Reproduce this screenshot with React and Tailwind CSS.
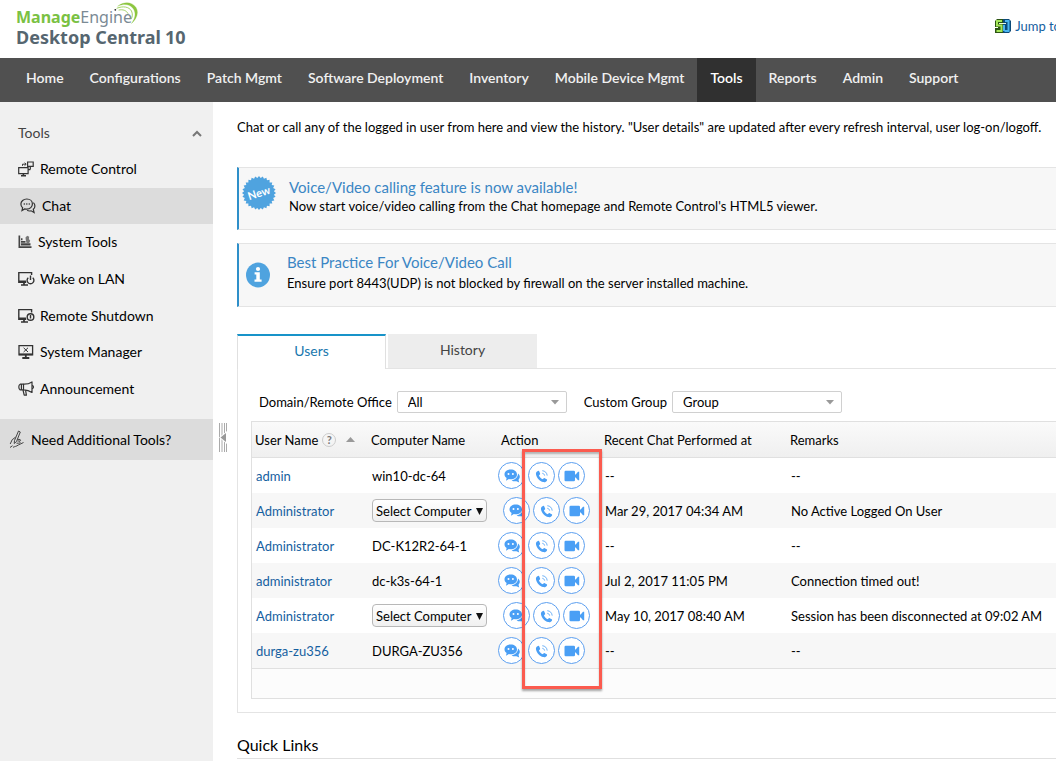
const NAV_ITEMS = [
  'Home',
  'Configurations',
  'Patch Mgmt',
  'Software Deployment',
  'Inventory',
  'Mobile Device Mgmt',
  'Tools',
  'Reports',
  'Admin',
  'Support',
];

const USERS = [
  { name: 'admin', computer: 'win10-dc-64', chatAt: '--', remarks: '--' },
  { name: 'Administrator', computer: null, chatAt: 'Mar 29, 2017 04:34 AM', remarks: 'No Active Logged On User' },
  { name: 'Administrator', computer: 'DC-K12R2-64-1', chatAt: '--', remarks: '--' },
  { name: 'administrator', computer: 'dc-k3s-64-1', chatAt: 'Jul 2, 2017 11:05 PM', remarks: 'Connection timed out!' },
  { name: 'Administrator', computer: null, chatAt: 'May 10, 2017 08:40 AM', remarks: 'Session has been disconnected at 09:02 AM' },
  { name: 'durga-zu356', computer: 'DURGA-ZU356', chatAt: '--', remarks: '--' },
];

/* ---------- sidebar icons ---------- */

function RemoteIcon() {
  return (
    <svg width="16" height="16" viewBox="0 0 16 16" fill="none" stroke="#333" strokeWidth="1.2">
      <path d="M9.6 1h5.6v4.4H9.6zM.7 6.7h9.4v6H.7zM12.3 5.4v3.2M12.3 8.6h-2" />
      <path d="M4.5 4.8V3.2h3.2M6.6 1.8l1.6 1.4-1.6 1.4" strokeWidth="1" />
      <path d="M3 14.7h5M5.4 12.7v2" strokeWidth="1.6" />
    </svg>
  );
}

function ChatIcon() {
  return (
    <svg width="16" height="16" viewBox="0 0 16 16" fill="none" stroke="#333" strokeWidth="1.2">
      <path d="M6.800 1C10 1 12.400 3.200 12.400 6s-2.400 5.200-5.600 5.200c-.8 0-1.500-.1-2.100-.3L2 12.500l.6-2.700C1.500 8.900.9 7.500.9 6c0-2.800 2.600-5 5.900-5z" />
      <path d="M13.400 4.600c1 .9 1.500 2 1.500 3.300 0 1.400-.6 2.600-1.600 3.400l.8 3.300-3-1.800c-1.500.4-2.900.2-4-.5" />
      <circle cx="4.300" cy="6" r=".8" fill="#333" stroke="none" />
      <circle cx="6.800" cy="6" r=".8" fill="#333" stroke="none" />
      <circle cx="9.300" cy="6" r=".8" fill="#333" stroke="none" />
    </svg>
  );
}

function SystemToolsIcon() {
  return (
    <svg width="14" height="14" viewBox="0 0 14 14" fill="#444">
      <path d="M.5.500H2.200v10.800h11.300v1.700H.500z" />
      <path d="M3 6h4.500v1.700H3zM3 8.300h9.500v2.300H3zM3 3.200h1.500v2H3z" />
      <path d="M7.500 2.500 9.200.700l2 1-.3 2.200 1.300 1.800-1 2.300H8.500L7.800 5.300z" fill="#777" />
    </svg>
  );
}

function WakeIcon() {
  return (
    <svg width="17" height="16" viewBox="0 0 17 16" fill="none" stroke="#333" strokeWidth="1.400">
      <path d="M13.600 4V1.600H.8v9.600h7.400" />
      <path d="M1 10.500h7" strokeWidth="2" />
      <path d="M3 14h7M6 11v3" strokeWidth="1.700" />
      <path d="M10.300 6.700a3.400 3.400 0 1 0 4.400 0M12.500 4.500V9" />
    </svg>
  );
}

function ShutdownIcon() {
  return (
    <svg width="17" height="16" viewBox="0 0 17 16" fill="none" stroke="#333" strokeWidth="1.400">
      <path d="M13.600 4.500V1.600H.8v9.600h7.400" />
      <path d="M1 10.500h7" strokeWidth="2" />
      <path d="M3 14h7M6 11v3" strokeWidth="1.700" />
      <circle cx="12.500" cy="9" r="3.300" />
      <path d="M12.500 7v3.500" />
    </svg>
  );
}

function ManagerIcon() {
  return (
    <svg width="16" height="16" viewBox="0 0 16 16" fill="none" stroke="#333" strokeWidth="1.300">
      <path d="M1 1.600h13.600v9.200H1z" />
      <path d="M1 10.300h13.600" strokeWidth="1.800" />
      <path d="M5.600 3.800l4.400 4.200M10 3.800L5.600 8" strokeWidth="1" />
      <path d="M4.300 14h7M7.800 11v3" strokeWidth="1.800" />
    </svg>
  );
}

function AnnouncementIcon() {
  return (
    <svg width="17" height="16" viewBox="0 0 17 16" fill="none" stroke="#333" strokeWidth="1.200" strokeLinejoin="round">
      <path d="M5.500 3.200C9 3.300 11.500 2.600 14 .9v10.600C11.500 9.800 9 8.800 5.500 8.900z" />
      <path d="M5.500 3.200H2.200C1 3.800.8 5 .8 6s.3 2.200 1.400 2.900h3.300M3.400 3.300v5.500M14 4.600c2 0 2 3 0 3" />
      <path d="M5 9l1.200 5.200h2.200L7.600 9.300" />
    </svg>
  );
}

function WritingHandIcon() {
  return (
    <svg width="16" height="19" viewBox="0 0 16 19" fill="none" stroke="#444" strokeWidth="1" strokeLinejoin="round">
      <path d="M9.500 1 5.500 10.500l-.3 3 2.300-2L11.300 2z" />
      <path d="M6.500 7.200 3.200 9.700 1.200 14M8.500 9.300l2.600.2c.8.400.6 1.500-.3 1.500H8.500M10.500 11.500c1.300.8.600 1.800-1 1.700H7.500M14.500 12.500 9.300 15c-1.700 1.400-3.700 1.500-5.300 2.300" />
      <path d="M1 17.500l2.500-1.800" />
    </svg>
  );
}

const TOOLS = [
  { label: 'Remote Control', icon: <RemoteIcon />, row: 'gap-1.5' },
  { label: 'Chat', icon: <ChatIcon />, row: 'gap-1.5 pl-0.5 bg-[#dcdcdc]' },
  { label: 'System Tools', icon: <SystemToolsIcon />, row: 'gap-1.5' },
  { label: 'Wake on LAN', icon: <WakeIcon />, row: 'gap-[5px]' },
  { label: 'Remote Shutdown', icon: <ShutdownIcon />, row: 'gap-[5px]' },
  { label: 'System Manager', icon: <ManagerIcon />, row: 'gap-1.5' },
  { label: 'Announcement', icon: <AnnouncementIcon />, row: 'gap-[5px]' },
];

/* ---------- action icons ---------- */

function BubblesIcon() {
  return (
    <svg width="16" height="14" viewBox="0 0 16 14" fill="#4a9ff5">
      <path d="M14 4.500c1.200.8 1.800 2 1.800 3.300 0 1.100-.5 2.200-1.300 3l.7 2.600-2.700-1.200c-1.800.4-3.700.1-4.900-.8C11.500 10.800 14 8 14 4.500z" />
      <path d="M6.700.500C10.300.500 13 2.600 13 5.400s-2.700 4.900-6.300 4.900c-.6 0-1.200-.1-1.800-.2L2 11.700l.6-2.800C1.300 8 .500 6.800.500 5.400.500 2.600 3.200.500 6.700.500z" />
      <g fill="#fff">
        <circle cx="4.500" cy="5" r="1" />
        <circle cx="8.900" cy="5" r="1" />
      </g>
    </svg>
  );
}

function PhoneIcon() {
  return (
    <svg width="14" height="14" viewBox="0 0 14 14" fill="none" stroke="#4a9ff5">
      <path d="M3 1.900c.7-.2 1 .1 1.300.7l.8 2c.2.500 0 .9-.5 1.200-.6.300-.7.700-.4 1.200.8 1.400 1.700 2.300 3 3 .5.300.9.200 1.300-.4.300-.5.700-.6 1.200-.4l2 1c.5.300.6.700.3 1.200-.7 1.500-2.200 2.100-3.800 1.700C4.600 12.100 1.700 9.200 1 5.500.700 3.700 1.500 2.400 3 1.900z" fill="#4a9ff5" stroke="none" />
      <path d="M7.300 4.300c1.300.2 2.100 1 2.300 2.300M7.300 1.700c2.800.3 4.600 2 4.900 4.900" strokeWidth="1" opacity=".8" />
    </svg>
  );
}

function VideoIcon() {
  return (
    <svg width="16" height="12" viewBox="0 0 16 12" fill="#4a9ff5">
      <rect x=".500" y=".700" width="10.500" height="10.600" rx="1.200" />
      <path d="M10.500 4.500h1.200L14 1.700h1.200v8.600H14l-2.300-2.800h-1.200z" />
    </svg>
  );
}

function ActionButton({ label, children }) {
  return (
    <button type="button" aria-label={label} className="flex size-[27px] items-center justify-center rounded-full border border-[#5c9ff0] bg-white">
      {children}
    </button>
  );
}

/* ---------- banner icons ---------- */

function NewBadge() {
  // 28 teeth around the rim
  const points = Array.from({ length: 56 }, (_, i) => {
    const r = i % 2 ? 15 : 17;
    const a = (i * Math.PI) / 28;
    return `${(17 + r * Math.cos(a)).toFixed(2)},${(17 + r * Math.sin(a)).toFixed(2)}`;
  }).join(' ');
  return (
    <svg width="34" height="34" viewBox="0 0 34 34">
      <polygon points={points} fill="#4fa3df" />
      <text x="17" y="21" textAnchor="middle" fill="#fff" fontFamily="Lato, sans-serif" fontSize="11" fontWeight="700" transform="rotate(-18 17 17)">New</text>
    </svg>
  );
}

function InfoBadge() {
  return (
    <svg width="24" height="26" viewBox="0 0 24 26">
      <ellipse cx="12" cy="13" rx="12" ry="12.500" fill="#4fa3df" />
      <path d="M8.600 10.200h5.200v7.300h1.800v2.200H8.500v-2.200h1.800v-5.100H8.600z" fill="#fff" />
      <circle cx="12" cy="7" r="2.100" fill="#fff" />
    </svg>
  );
}

function Banner({ icon, title, children, className }) {
  return (
    <section className={`flex border-y border-l-2 border-y-[#e4e4e4] border-l-[#2e8fc9] bg-[#f7f7f7] pt-2 ${className}`}>
      {icon}
      <div>
        <h2 className="text-[15px] leading-5 text-[#3b86c4]">{title}</h2>
        {children}
      </div>
    </section>
  );
}

function FilterSelect({ id, label, value }) {
  return (
    <div className="flex items-center gap-[5px]">
      <label htmlFor={id}>{label}</label>
      <div className="relative">
        <select id={id} className="block h-[22px] w-[170px] appearance-none rounded-xs border border-[#d0d0d0] bg-white pl-2.5 text-[13px] leading-5">
          <option>{value}</option>
        </select>
        <svg className="pointer-events-none absolute top-[9px] right-2" width="8" height="5" viewBox="0 0 8 5">
          <path d="M0 0h8L4 4.500z" fill="#999" />
        </svg>
      </div>
    </div>
  );
}

function ComputerSelect() {
  return (
    <div className="relative w-[115px]">
      <select aria-label="Select Computer" className="block h-[23px] w-full appearance-none rounded border border-[#b8b8b8] bg-linear-to-b from-white to-[#f0f0f0] pl-[3px] text-[13px] leading-5">
        <option>Select Computer</option>
      </select>
      <svg className="pointer-events-none absolute top-[9px] right-1" width="7" height="7" viewBox="0 0 7 7">
        <path d="M0 0h7L3.500 7z" fill="#111" />
      </svg>
    </div>
  );
}

function Header() {
  return (
    <header className="flex h-[58px] items-start justify-between overflow-hidden">
      <div className="relative pt-2 pl-4">
        <div className="font-['Noto_Sans'] text-[16px] leading-[19px] text-[#7b8a94]">
          <span className="font-bold text-[#7ac143]">Manage</span>Engine
        </div>
        <div className="flex gap-1 font-['Noto_Sans'] text-[18px] leading-5 font-bold text-[#566670]">
          <span>Desktop Central</span>
          <span>10</span>
        </div>
        <svg className="absolute top-0.5 left-[114px]" width="25" height="24" viewBox="0 0 25 24" fill="none" stroke="#8cc63f" strokeLinecap="round">
          <path d="M4 4C10-.8 18-.3 22 5.500c3 5 1 11-4.500 16C21.500 16 22 11 19.500 7 16 1.800 10 1.500 4 4z" fill="#8cc63f" strokeWidth=".3" />
          <path d="M3 6.200c6-2.500 12-1.500 14.500 2.800 1.300 3 1 5.500 0 7.500M5 8c4-.9 7.500.5 9 3.500" strokeWidth=".8" />
          <circle cx="1.300" cy="7.800" r=".9" fill="#222" stroke="none" />
        </svg>
      </div>
      <a href="#jump" className="-mr-[5px] flex items-center gap-1 pt-4 text-[13px] leading-5 whitespace-nowrap text-[#1560a0]">
        <svg width="16" height="14" viewBox="0 0 16 14">
          <path d="M2 0h6v14H0V9h3V8H0V2z" fill="#2c5512" />
          <path d="M8 0h6l2 2v10l-2 2H8z" fill="#0c4a78" />
          <path d="M7 2H2v4.500h4.500V12H1.500" fill="none" stroke="#a5e65a" strokeWidth="2" />
          <path d="M9 12V6M10 2h3.500v10H9.500" fill="none" stroke="#48b4f0" strokeWidth="2" />
          <path d="M4 4.500h7" stroke="#e8fbe0" strokeWidth="1" />
        </svg>
        Jump to
      </a>
    </header>
  );
}

function Sidebar() {
  return (
    <aside className="w-[213px] shrink-0 bg-[#f0f0f0] text-[14px] leading-5">
      <div className="flex items-center justify-between pt-[21px] pr-[11px] pb-2 pl-[18px] text-[#444]">
        Tools
        <svg width="10" height="7" viewBox="0 0 10 7" fill="none" stroke="#777" strokeWidth="2">
          <path d="M1 6l4-4 4 4" />
        </svg>
      </div>
      <ul className="grid h-64 grid-rows-7">
        {TOOLS.map(({ label, icon, row }) => (
          <li key={label} className={`flex ${row}`}>
            <a href="#tool" className="flex w-full items-center gap-[inherit] pl-[18px]">
              {icon}
              {label}
            </a>
          </li>
        ))}
      </ul>
      <a href="#more" className="mt-3 flex h-[41px] items-center gap-1.5 bg-[#dcdcdc] pl-[9px]">
        <WritingHandIcon />
        Need Additional Tools?
      </a>
    </aside>
  );
}

function UsersTable() {
  return (
    <div className="relative mt-2 ml-[13px] border-y border-l border-[#e0e0e0]">
      <table className="w-full table-fixed border-separate border-spacing-0 text-left whitespace-nowrap">
        <colgroup>
          <col className="w-[116px]" />
          <col className="w-[130px]" />
          <col className="w-[103px]" />
          <col className="w-[186px]" />
          <col />
        </colgroup>
        <thead>
          <tr className="h-9 bg-linear-to-b from-[#fafafa] to-[#efefef] *:border-b *:border-[#e0e0e0] *:p-0 *:pl-[3px] *:font-normal">
            <th>
              <span className="flex items-center gap-1">
                User Name
                <span className="flex size-3.5 items-center justify-center rounded-full border border-[#ccc] text-[11px] leading-3 font-bold text-[#777]">?</span>
                <svg className="ml-1.5" width="9" height="5" viewBox="0 0 9 5">
                  <path d="M0 5h9L4.500 0z" fill="#999" />
                </svg>
              </span>
            </th>
            <th>Computer Name</th>
            <th>Action</th>
            <th>Recent Chat Performed at</th>
            <th>Remarks</th>
          </tr>
        </thead>
        <tbody>
          {USERS.map((user, i) => (
            <tr key={i} className="h-[35px] *:p-0 *:pl-1 even:bg-[#f7f7f7] last:bg-[#f3f3f3]">
              <td>
                <a href="#user" className="text-[#1560a0]">{user.name}</a>
              </td>
              <td>{user.computer ?? <ComputerSelect />}</td>
              <td>
                <div className={`flex gap-[3px] ${user.computer ? '-ml-1' : 'ml-px'}`}>
                  <ActionButton label="Chat"><BubblesIcon /></ActionButton>
                  <ActionButton label="Voice call"><PhoneIcon /></ActionButton>
                  <ActionButton label="Video call"><VideoIcon /></ActionButton>
                </div>
              </td>
              <td>{user.chatAt}</td>
              <td>{user.remarks}</td>
            </tr>
          ))}
        </tbody>
      </table>
      <div className="h-[30px] border-t border-[#e0e0e0] bg-[#fcfcfc]" />
      {/* highlight round the call buttons */}
      <div className="pointer-events-none absolute top-[27px] bottom-[9px] left-[270px] w-20 border-3 border-[#fb5b4f] shadow-[0_2px_2px_rgba(0,0,0,0.35),inset_0_2px_2px_rgba(0,0,0,0.25)]" />
    </div>
  );
}

export default function App() {
  return (
    <div className="flex min-h-screen flex-col overflow-hidden bg-white font-[Lato,sans-serif] text-[13px] leading-[18px] text-black">
      <Header />
      <nav className="flex h-11 bg-[#505050] pl-[13px] text-[14px] font-semibold whitespace-nowrap text-[#f0f0f0]">
        {NAV_ITEMS.map((item) => (
          <a key={item} href="#nav" className={`flex items-center px-[13px] pb-1 ${item === 'Tools' ? 'bg-[#303030] text-white' : ''}`}>
            {item}
          </a>
        ))}
      </nav>

      <div className="flex flex-1">
        <Sidebar />
        <button type="button" aria-label="Collapse sidebar" className="flex w-6 shrink-0 items-start pt-[321px] pl-1.5">
          <svg width="8" height="29" viewBox="0 0 8 29">
            <path d="M.5 0v29M3 0v29M5.500 0v29M7.500 0v29" stroke="#aaa" strokeWidth="1" />
            <path d="M8 8v13L0 14.500z" fill="#fff" />
            <path d="M7 10v9l-5.500-4.500z" fill="#999" />
          </svg>
        </button>

        <main className="min-w-0 flex-1 pt-4">
          <p className="whitespace-nowrap">
            Chat or call any of the logged in user from here and view the history. "User details" are updated after every refresh interval, user log-on/logoff.
          </p>

          <Banner icon={<NewBadge />} title="Voice/Video calling feature is now available!" className="mt-[31px] gap-[13px] pb-3.5 pl-[3px] *:last:pt-px">
            <p>Now start voice/video calling from the Chat homepage and Remote Control's HTML5 viewer.</p>
          </Banner>
          <Banner icon={<div className="pt-2.5"><InfoBadge /></div>} title="Best Practice For Voice/Video Call" className="mt-[13px] gap-[17px] pb-3.5 pl-[7px]">
            <p className="pt-0.5">Ensure port 8443(UDP) is not blocked by firewall on the server installed machine.</p>
          </Banner>

          <div role="tablist" className="mt-[27px] flex h-[35px] text-[14px]">
            <button type="button" role="tab" aria-selected="true" className="w-[149px] border-x border-t-2 border-x-[#e0e0e0] border-t-[#1893c9] pb-[3px] text-[#1978ae]">
              Users
            </button>
            <div className="flex flex-1 border-b border-[#e4e4e4] pl-0.5">
              <button type="button" role="tab" aria-selected="false" className="w-[149px] bg-[#ededed] pb-0.5 text-[#444]">
                History
              </button>
            </div>
          </div>

          <div className="border-b border-l border-[#e4e4e4] pt-[22px] pb-[13px]">
            <div className="flex gap-[17px] pl-[21px]">
              <FilterSelect id="office" label="Domain/Remote Office" value="All" />
              <FilterSelect id="group" label="Custom Group" value="Group" />
            </div>
            <UsersTable />
          </div>

          <h2 className="mt-[22px] border-b border-[#e0e0e0] pb-[3px] text-[16px] leading-5">Quick Links</h2>
        </main>
      </div>
    </div>
  );
}
